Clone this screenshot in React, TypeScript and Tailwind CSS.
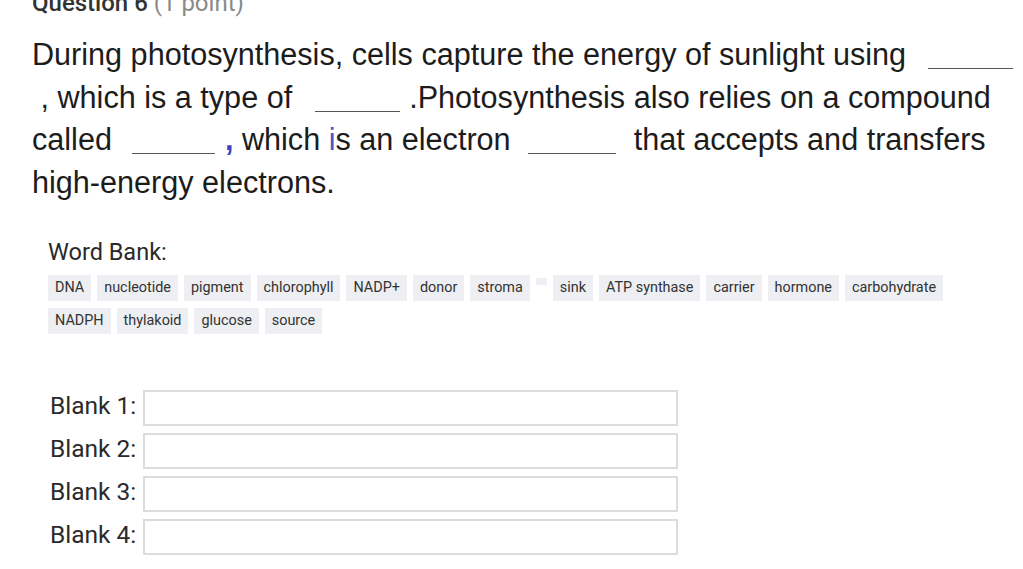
import React from "react";

const chipsRow1 = ["DNA", "nucleotide", "pigment", "chlorophyll", "NADP+", "donor", "stroma", "", "sink", "ATP synthase", "carrier", "hormone", "carbohydrate"];
const chipsRow2 = ["NADPH", "thylakoid", "glucose", "source"];

function Chip({ t }: { t: string }) {
  if (t === "") {
    return <span className="self-start mt-[3px] w-[11px] h-[7px] bg-[#eef0f3]" />;
  }
  return (
    <span className="bg-[#edeff2] px-[7px] h-[26px] flex items-center text-[14.4px] text-[#333] leading-none">
      {t}
    </span>
  );
}

export default function App() {
  return (
    <div className="w-[1023px] h-[569px] overflow-hidden bg-white pl-[32px]" style={{ fontFamily: "Roboto, 'Liberation Sans', sans-serif" }}>
      <div className="-mt-[10px] h-[26px] text-[24px] leading-[26px] whitespace-nowrap">
        <span className="font-medium text-[#333]">Question 6</span>
        <span className="text-[#8a8a8a]"> (1 point)</span>
      </div>
      <p
        className="mt-[17px] text-[30.6px] leading-[42.5px] text-[#1c1c1c] whitespace-nowrap"
        style={{ fontFamily: "'Liberation Sans', Arial, sans-serif" }}
      >
        During photosynthesis, cells capture the energy of sunlight using
        <span className="inline-block w-[22px]" />
        <span className="inline-block w-[85px] border-b border-[#555] h-[1px] align-[-4px]" />
        <br />
        &nbsp;, which is a type of
        <span className="inline-block w-[23px]" />
        <span className="inline-block w-[85px] border-b border-[#555] h-[1px] align-[-4px]" />
        <span className="inline-block w-[9px]" />
        .Photosynthesis also relies on a compound
        <br />
        called
        <span className="inline-block w-[20px]" />
        <span className="inline-block w-[83px] border-b border-[#555] h-[1px] align-[-4px]" />
        <span className="inline-block w-[10px]" />
        <span className="text-[#3b46c4] font-bold">,</span> which <span className="text-[#4a55c8]">i</span>s an electron
        <span className="inline-block w-[17px]" />
        <span className="inline-block w-[88px] border-b border-[#555] h-[1px] align-[-4px]" />
        <span className="inline-block w-[18px]" />
        that accepts and transfers
        <br />
        high-energy electrons.
      </p>
      <div className="mt-[36px] pl-[16px]">
        <div className="text-[23.5px] leading-[26px] text-[#2a2a2a]">Word Bank:</div>
        <div className="mt-[10px] flex gap-[6px] items-start">
          {chipsRow1.map((c, i) => (
            <Chip key={i} t={c} />
          ))}
        </div>
        <div className="mt-[7px] flex gap-[6px] items-start">
          {chipsRow2.map((c, i) => (
            <Chip key={i} t={c} />
          ))}
        </div>
      </div>
      <div className="mt-[56px] pl-[18px] flex flex-col gap-[7px]">
        {[1, 2, 3, 4].map((n) => (
          <div key={n} className="flex items-center">
            <span className="w-[93px] pb-[5px] text-[24.5px] leading-[26px] text-[#2a2a2a] whitespace-nowrap">Blank {n}:</span>
            <div className="w-[535px] h-[36px] border-2 border-[#dcdcdc] bg-white" />
          </div>
        ))}
      </div>
    </div>
  );
}
